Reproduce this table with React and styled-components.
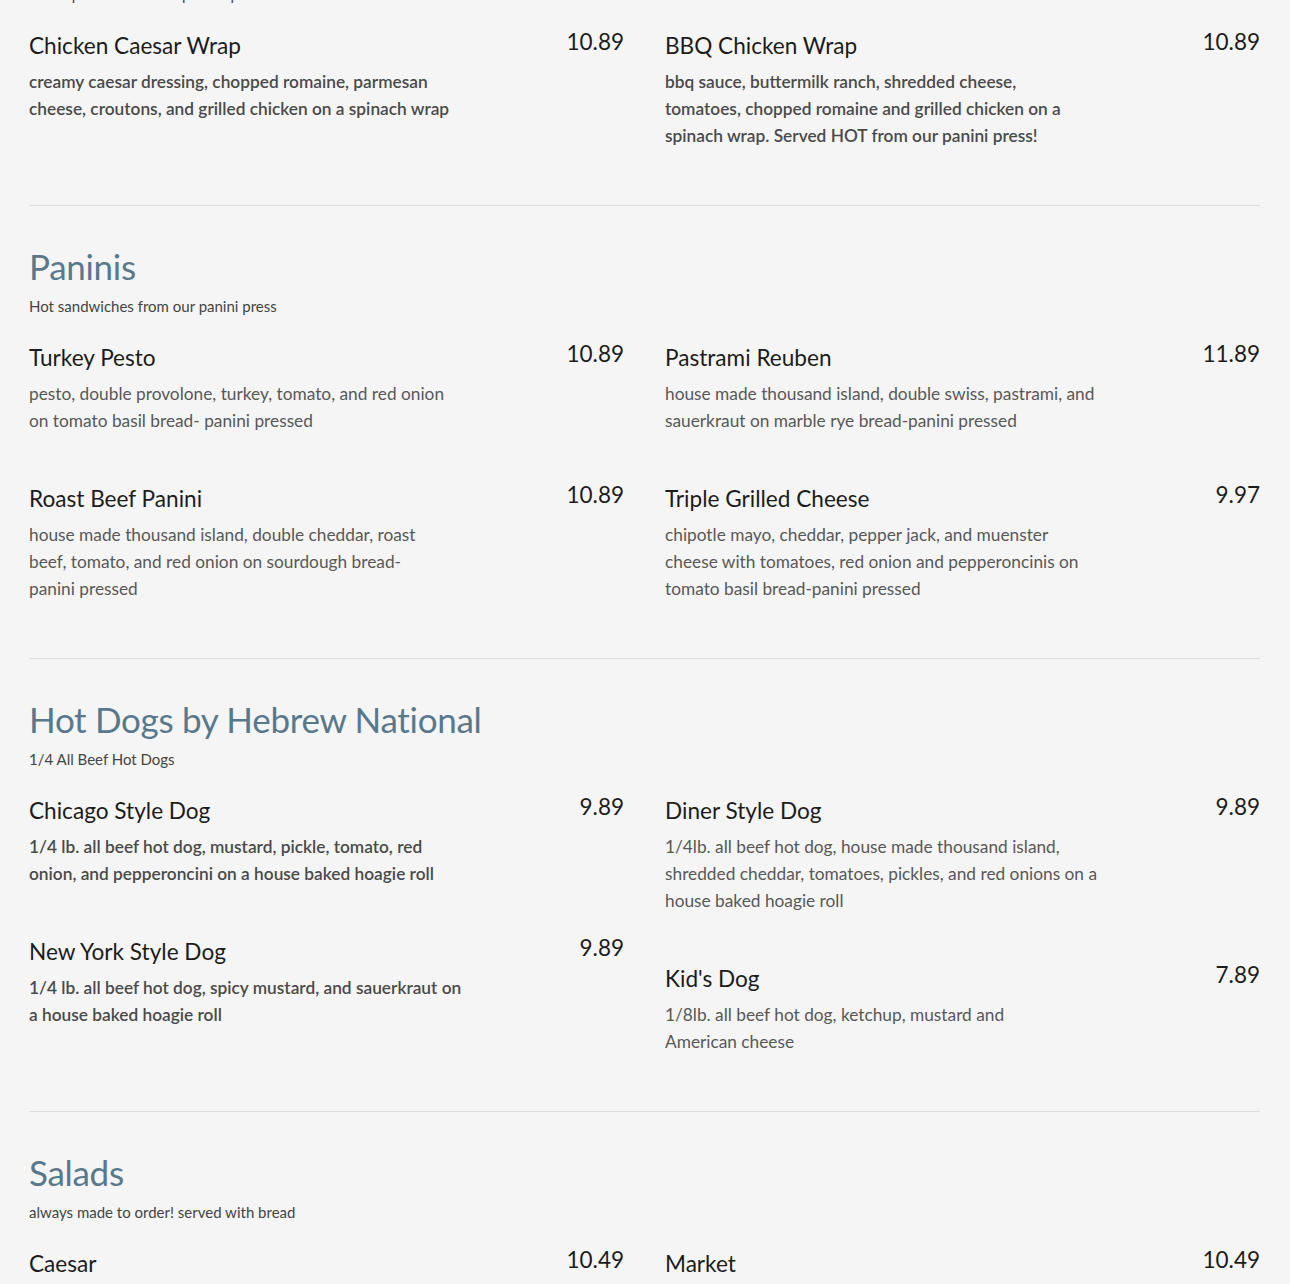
import React from 'react';
import styled, { createGlobalStyle } from 'styled-components';

const GlobalStyle = createGlobalStyle`
    body {
        margin: 0;
        background: #f5f5f5;
        font-family: Lato, "Open Sans", sans-serif;
        color: #222;
    }
`;

const Page = styled.div`
    margin-top: -106px;
    padding: 0 30px 0 29px;
`;

const Section = styled.section`
    padding: 38px 0 56px;
    border-bottom: 1px solid #dcdcdc;
`;

const SectionTitle = styled.h2`
    margin: 0;
    font-size: 35px;
    line-height: 44px;
    font-weight: 400;
    color: #58798d;
    letter-spacing: -0.3px;
`;

const SectionNote = styled.p`
    margin: 8px 0 0;
    font-size: 15px;
    line-height: 20px;
    color: #444;
`;

const Columns = styled.div`
    display: grid;
    grid-template-columns: 1fr 1fr;
    column-gap: 41px;
    align-items: start;
    margin-top: 26px;
`;

const Column = styled.div`
    display: flex;
    flex-direction: column;
    gap: 49px;
`;

const Item = styled.div`
    display: flex;
    flex-direction: column;
`;

const ItemHead = styled.div`
    display: flex;
    justify-content: space-between;
    align-items: flex-start;
`;

const ItemName = styled.h3`
    margin: 0;
    font-size: 22.6px;
    line-height: 32px;
    font-weight: 400;
    color: #1c1c1c;
`;

const Price = styled.span`
    font-size: 22.5px;
    line-height: 24px;
    color: #1c1c1c;
`;

const Description = styled.p`
    margin: 6px 0 0;
    max-width: ${props => props.$width}px;
    font-size: 17.3px;
    line-height: 27px;
    color: ${props => props.$strong ? '#4a4a4a' : '#585858'};
    font-weight: ${props => props.$strong ? 600 : 400};
`;

const menu = [
    {
        title: 'Wraps',
        note: 'all wraps served with a pickle spear',
        left: [
            { name: 'Chicken Caesar Wrap', price: '10.89', strong: true, desc: 'creamy caesar dressing, chopped romaine, parmesan cheese, croutons, and grilled chicken on a spinach wrap' },
        ],
        right: [
            { name: 'BBQ Chicken Wrap', price: '10.89', strong: true, width: 410, desc: 'bbq sauce, buttermilk ranch, shredded cheese, tomatoes, chopped romaine and grilled chicken on a spinach wrap. Served HOT from our panini press!' },
        ],
    },
    {
        title: 'Paninis',
        note: 'Hot sandwiches from our panini press',
        left: [
            { name: 'Turkey Pesto', price: '10.89', desc: 'pesto, double provolone, turkey, tomato, and red onion on tomato basil bread- panini pressed' },
            { name: 'Roast Beef Panini', price: '10.89', desc: 'house made thousand island, double cheddar, roast beef, tomato, and red onion on sourdough bread- panini pressed' },
        ],
        right: [
            { name: 'Pastrami Reuben', price: '11.89', width: 440, desc: 'house made thousand island, double swiss, pastrami, and sauerkraut on marble rye bread-panini pressed' },
            { name: 'Triple Grilled Cheese', price: '9.97', width: 430, desc: 'chipotle mayo, cheddar, pepper jack, and muenster cheese with tomatoes, red onion and pepperoncinis on tomato basil bread-panini pressed' },
        ],
    },
    {
        title: 'Hot Dogs by Hebrew National',
        note: '1/4 All Beef Hot Dogs',
        left: [
            { name: 'Chicago Style Dog', price: '9.89', strong: true, desc: '1/4 lb. all beef hot dog, mustard, pickle, tomato, red onion, and pepperoncini on a house baked hoagie roll' },
            { name: 'New York Style Dog', price: '9.89', strong: true, width: 438, desc: '1/4 lb. all beef hot dog, spicy mustard, and sauerkraut on a house baked hoagie roll' },
        ],
        right: [
            { name: 'Diner Style Dog', price: '9.89', width: 440, desc: '1/4lb. all beef hot dog, house made thousand island, shredded cheddar, tomatoes, pickles, and red onions on a house baked hoagie roll' },
            { name: "Kid's Dog", price: '7.89', width: 390, desc: '1/8lb. all beef hot dog, ketchup, mustard and American cheese' },
        ],
    },
    {
        title: 'Salads',
        note: 'always made to order! served with bread',
        left: [
            { name: 'Caesar', price: '10.49', desc: 'romaine, parmesan cheese, croutons, and creamy caesar dressing' },
        ],
        right: [
            { name: 'Market', price: '10.49', width: 440, desc: 'mixed greens, tomatoes, cucumbers, red onion, carrots and your choice of dressing' },
        ],
    },
];

const MenuItem = ({ item }) => (
    <Item>
        <ItemHead>
            <ItemName>{item.name}</ItemName>
            <Price>{item.price}</Price>
        </ItemHead>
        <Description $strong={item.strong} $width={item.width || 422}>{item.desc}</Description>
    </Item>
);

const App = () => {
    return (
        <>
            <GlobalStyle />
            <Page>
                {menu.map(section => (
                    <Section key={section.title}>
                        <SectionTitle>{section.title}</SectionTitle>
                        <SectionNote>{section.note}</SectionNote>
                        <Columns>
                            <Column>
                                {section.left.map(item => <MenuItem key={item.name} item={item} />)}
                            </Column>
                            <Column>
                                {section.right.map(item => <MenuItem key={item.name} item={item} />)}
                            </Column>
                        </Columns>
                    </Section>
                ))}
            </Page>
        </>
    );
};

export default App;
